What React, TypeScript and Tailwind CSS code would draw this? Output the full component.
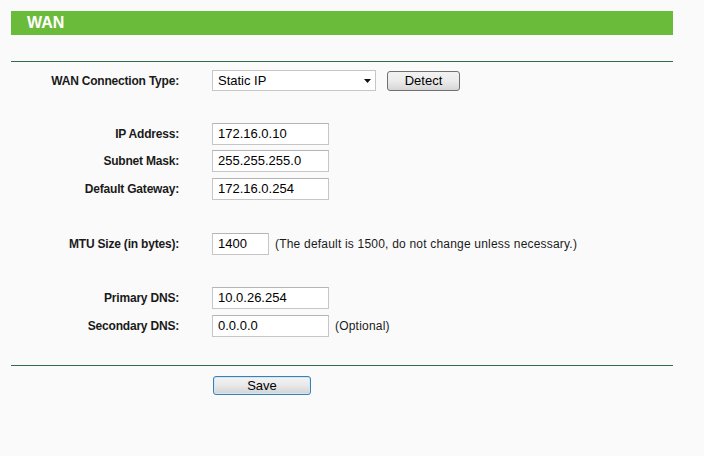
import React from "react";

const font = { fontFamily: '"Liberation Sans", Arial, sans-serif' };

function Label({ children }: { children: React.ReactNode }) {
  return (
    <div className="w-[168px] shrink-0 text-right text-[12px] font-bold tracking-[-0.2px] text-[#1a1a1a]">
      {children}
    </div>
  );
}

function Field({ value, w = "w-[117px]" }: { value: string; w?: string }) {
  return (
    <div
      className={`${w} h-[22px] border border-[#c6c6c6] border-t-[#b5b5b5] bg-white pl-[5px] text-[13px] leading-[20px] text-black`}
    >
      {value}
    </div>
  );
}

function Row({ children, className = "" }: { children: React.ReactNode; className?: string }) {
  return <div className={`flex items-center h-[27.5px] ${className}`}>{children}</div>;
}

export default function App() {
  return (
    <div className="w-[704px] h-[456px] bg-[#fafafa] pt-[11px]" style={font}>
      <div className="ml-[11px] w-[662px] h-[24px] bg-[#6bbb3a] pl-[16px] text-[16px] font-bold leading-[24px] text-white">
        WAN
      </div>
      <div className="ml-[11px] mt-[26px] w-[662px] h-px bg-[#2e6d4e]" />

      <div className="ml-[11px] mt-[4.5px]">
        <Row className="h-[28px]">
          <Label>WAN Connection Type:</Label>
          <div className="ml-[33px] flex h-[21px] w-[164px] items-center justify-between border border-[#c6c6c6] bg-white pl-[5px] pr-[4px] text-[13px] text-black">
            <span>Static IP</span>
            <svg width="7" height="4" viewBox="0 0 7 4">
              <path d="M0 0H7L3.5 4Z" fill="#111" />
            </svg>
          </div>
          <div className="ml-[11px] flex h-[20px] w-[73px] items-center justify-center rounded-[3px] border border-[#707070] bg-gradient-to-b from-[#f2f2f2] via-[#ebebeb] to-[#d6d6d6] text-[13px] text-black">
            Detect
          </div>
        </Row>

        <div className="mt-[25.5px]">
          <Row>
            <Label>IP Address:</Label>
            <div className="ml-[33px]">
              <Field value="172.16.0.10" />
            </div>
          </Row>
          <Row>
            <Label>Subnet Mask:</Label>
            <div className="ml-[33px]">
              <Field value="255.255.255.0" />
            </div>
          </Row>
          <Row>
            <Label>Default Gateway:</Label>
            <div className="ml-[33px]">
              <Field value="172.16.0.254" />
            </div>
          </Row>
        </div>

        <div className="mt-[27px]">
          <Row className="h-[28px]">
            <Label>MTU Size (in bytes):</Label>
            <div className="ml-[33px]">
              <Field value="1400" w="w-[57px]" />
            </div>
            <span className="ml-[6px] text-[12px] tracking-[0.2px] text-[#1a1a1a]">
              (The default is 1500, do not change unless necessary.)
            </span>
          </Row>
        </div>

        <div className="mt-[26px]">
          <Row className="h-[28px]">
            <Label>Primary DNS:</Label>
            <div className="ml-[33px]">
              <Field value="10.0.26.254" />
            </div>
          </Row>
          <Row className="h-[28px]">
            <Label>Secondary DNS:</Label>
            <div className="ml-[33px]">
              <Field value="0.0.0.0" />
            </div>
            <span className="ml-[6px] text-[12px] tracking-[0.2px] text-[#1a1a1a]">(Optional)</span>
          </Row>
        </div>
      </div>

      <div className="ml-[11px] mt-[25.5px] w-[662px] h-px bg-[#2e6d4e]" />

      <div className="ml-[213px] mt-[10px] flex h-[19px] w-[98px] items-center justify-center rounded-[3px] border border-[#3c7fb1] bg-gradient-to-b from-[#f4f4f4] via-[#e8e8e8] to-[#d3d3d3] text-[13px] text-black shadow-[inset_0_0_0_1px_#cfe8f7]">
        Save
      </div>
    </div>
  );
}
